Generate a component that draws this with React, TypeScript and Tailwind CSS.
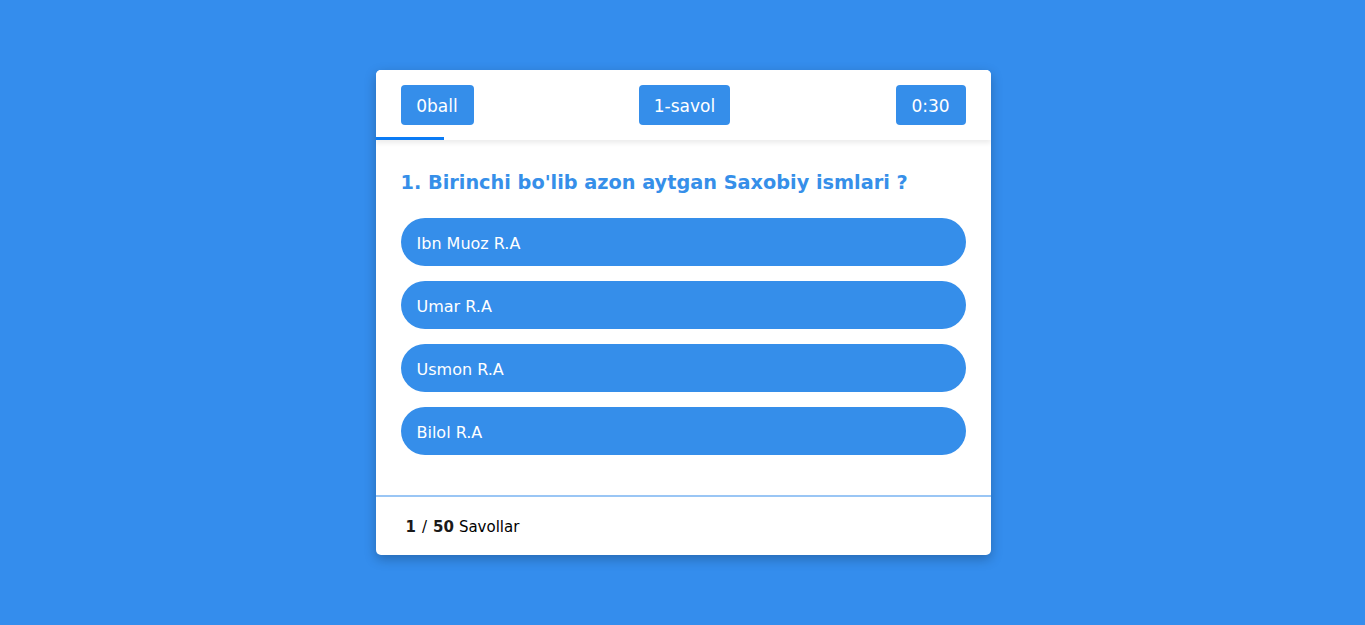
import React from "react";

const options = ["Ibn Muoz R.A", "Umar R.A", "Usmon R.A", "Bilol R.A"];

export default function App() {
  return (
    <div
      className="min-h-screen w-full bg-[#348ded] flex justify-center pt-[70px] pl-[1px]"
      style={{ fontFamily: '"DejaVu Sans", "Noto Sans", sans-serif' }}
    >
      <div className="w-[615px] h-[485px] bg-white rounded-[5px] shadow-[0_4px_12px_rgba(0,0,0,0.25)] flex flex-col overflow-hidden">
        <div className="relative h-[70px] px-[25px] flex items-center justify-between shadow-[0_3px_5px_rgba(0,0,0,0.08)] z-10 bg-white">
          <div className="h-[40px] w-[73px] pt-[3px] rounded-[4px] bg-[#358eea] text-white text-[17px] flex items-center justify-center">0ball</div>
          <div className="h-[40px] w-[91px] pt-[3px] rounded-[4px] bg-[#358eea] text-white text-[17px] flex items-center justify-center">1-savol</div>
          <div className="h-[40px] w-[70px] pt-[3px] rounded-[4px] bg-[#358eea] text-white text-[17px] flex items-center justify-center">0:30</div>
          <div className="absolute left-0 bottom-0 h-[3px] w-[68px] bg-[#0a7bf5]" />
        </div>
        <div className="px-[25px] pt-[28px] pb-[40px]">
          <h2 className="text-[19.3px] font-semibold leading-[30px] text-[#368fe9] mb-[20px]">
            1. Birinchi bo'lib azon aytgan Saxobiy ismlari ?
          </h2>
          <div className="flex flex-col gap-[15px]">
            {options.map((o) => (
              <div key={o} className="h-[48px] pt-[3px] rounded-full bg-[#358eea] text-white text-[16px] flex items-center px-[16px]">
                {o}
              </div>
            ))}
          </div>
        </div>
        <div className="border-t-2 border-[#9ac6f5]" />
        <div className="flex-1 flex items-center pt-[2px] px-[30px] text-[15px] text-black">
          <span className="font-semibold text-[#1a1a1a]">1</span>
          <span className="mx-[6px]">/</span>
          <span className="font-semibold text-[#1a1a1a]">50</span>
          <span className="ml-[5px]">Savollar</span>
        </div>
      </div>
    </div>
  );
}
